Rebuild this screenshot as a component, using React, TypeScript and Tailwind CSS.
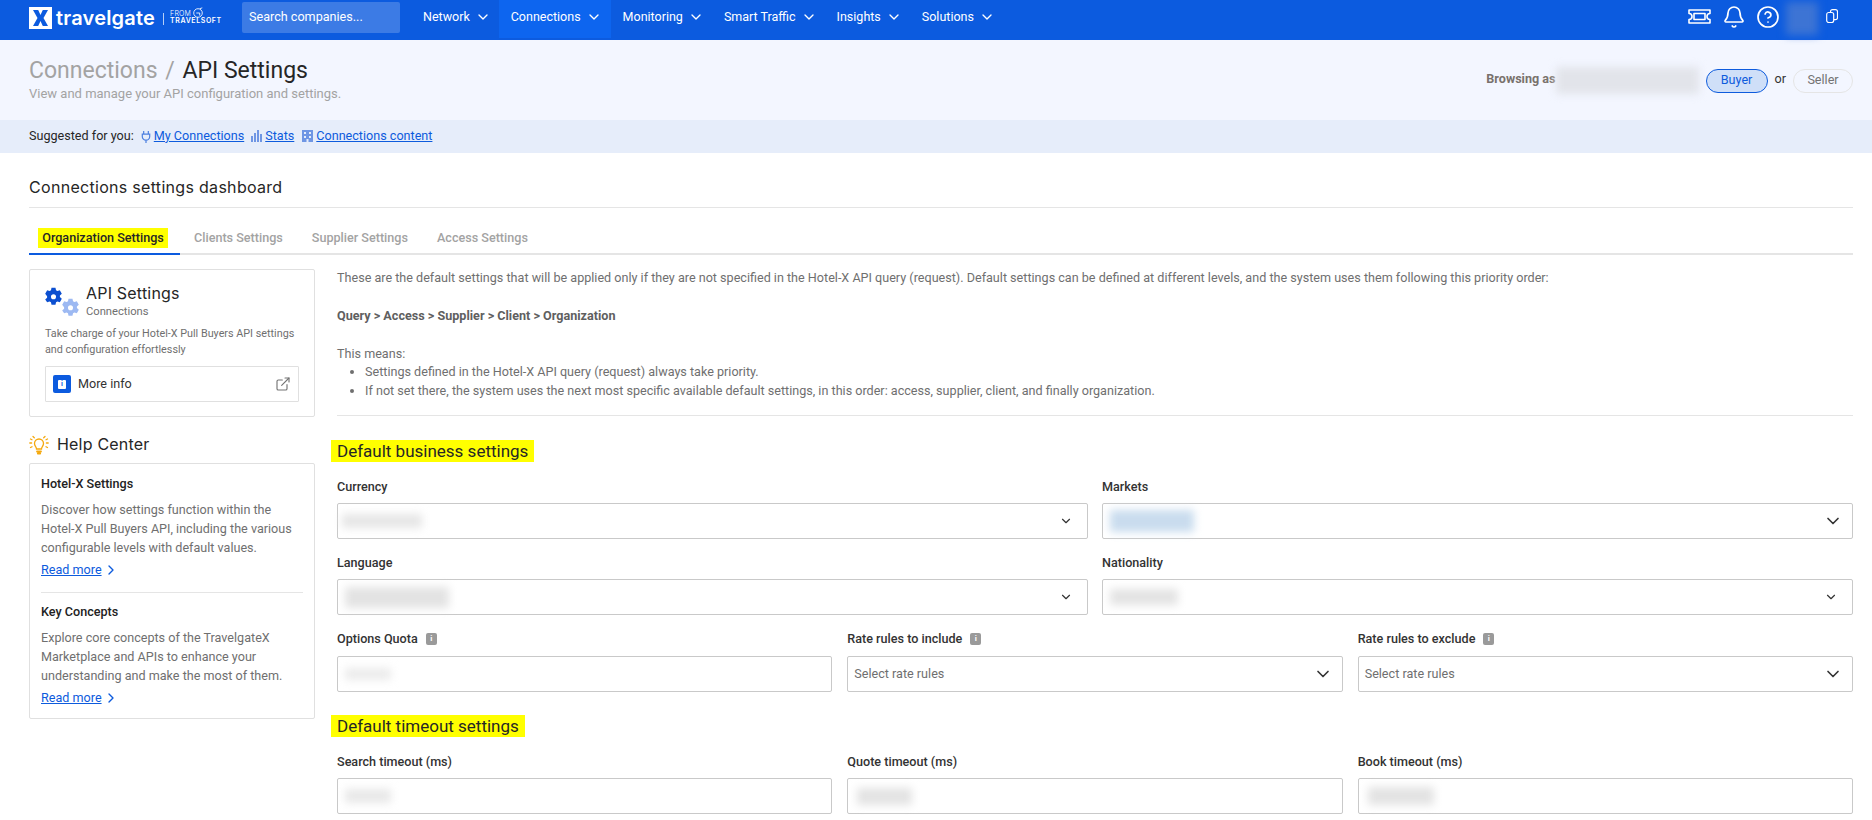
import { ChevronDown, ChevronRight, Bell, CircleHelp, ExternalLink } from "lucide-react"

const navItems = [
  { label: "Network", cls: "ml-[23px]" },
  { label: "Connections", cls: "ml-[8px] pl-[12px] pr-[9px] bg-[#0d65ef]" },
  { label: "Monitoring", cls: "ml-[12px]" },
  { label: "Smart Traffic", cls: "ml-[20px]" },
  { label: "Insights", cls: "ml-[20px]" },
  { label: "Solutions", cls: "ml-[20px]" },
]

function Gear({ className, color }: { className: string; color: string }) {
  return (
    <svg viewBox="0 0 24 24" className={className} fill={color}>
      <path
        fillRule="evenodd"
        d="M9.500 1h5l.7 3.200 1.700 1 3.100-1 2.500 4.300-2.400 2.200v2l2.400 2.200-2.500 4.300-3.100-1-1.700 1-.7 3.200h-5l-.7-3.200-1.700-1-3.100 1L1.500 15.900l2.400-2.200v-2L1.500 8.500 4 4.200l3.100 1 1.700-1L9.500 1zM12 9a3.200 3.200 0 1 0 0 6.400A3.200 3.200 0 0 0 12 9z"
      />
    </svg>
  )
}

function InfoTag() {
  return (
    <span className="ml-[8px] inline-flex h-[12px] w-[11px] items-center justify-center rounded-[2px] bg-[#9a9a9a] text-[8px] font-bold leading-none text-white">
      i
    </span>
  )
}

function Blur({ className }: { className: string }) {
  return <div className={`blur-[4px] ${className}`} />
}

function Field({
  label,
  info,
  placeholder,
  blur,
  chevron,
}: {
  label: string
  info?: boolean
  placeholder?: string
  blur?: string
  chevron?: "small" | "large"
}) {
  return (
    <div className={info ? "flex flex-col gap-[9px]" : "flex flex-col gap-[8px]"}>
      <div className="flex h-[17px] items-center text-[12.6px] font-medium leading-[17px] text-[#333]">
        {label}
        {info && <InfoTag />}
      </div>
      <div className="flex h-[36px] items-center justify-between rounded-[2px] border border-[#c9c9c9] bg-white pl-[4px] pr-[13px]">
        {blur && <Blur className={blur} />}
        {placeholder && <span className="pl-[2px] text-[12.6px] text-[#6f6f6f]">{placeholder}</span>}
        {chevron === "small" && <ChevronDown size={14} strokeWidth={2} className="ml-auto mr-[1px] text-[#333]" />}
        {chevron === "large" && <ChevronDown size={20} strokeWidth={2} className="ml-auto mr-[-4px] text-[#333]" />}
      </div>
    </div>
  )
}

function HelpItem({ title, lines }: { title: string; lines: string[] }) {
  return (
    <div>
      <div className="text-[12.6px] font-medium leading-[19px] text-[#222]">{title}</div>
      <div className="mt-[7px] text-[12.6px] leading-[19px] text-[#6f6f6f]">
        {lines.map((line) => (
          <div key={line}>{line}</div>
        ))}
      </div>
      <a className="mt-[3px] flex items-center text-[12.6px] leading-[19px] text-[#0d5bdd]">
        <span className="underline">Read more</span>
        <ChevronRight size={16} strokeWidth={2} className="ml-[1px]" />
      </a>
    </div>
  )
}

export default function App() {
  return (
    <div className="h-[820px] w-[1872px] overflow-hidden bg-white font-['Roboto',sans-serif]">
      {/* top nav */}
      <header className="flex h-[40px] items-start bg-[#0c5bdf] text-white">
        <div className="flex w-[242px] shrink-0 items-start">
          <div className="ml-[29px] mt-[7px] flex h-[22px] w-[23px] items-center justify-center bg-white">
            <svg viewBox="0 0 23 22" className="h-[22px] w-[23px]">
              <path d="M4 3h5.200l2.300 5 2.300-5H19l-4.500 8L19 19h-5.200l-2.300-5-2.300 5H4l4.500-8L4 3z" fill="#0c5bdf" />
            </svg>
          </div>
          <span className="ml-[4px] mt-[5px] font-['Inter',sans-serif] text-[20px] font-semibold leading-[26px] tracking-[0.2px]">
            travelgate
          </span>
          <div className="ml-[8px] mt-[13px] h-[12px] w-px bg-white/70" />
          <div className="relative ml-[6px] mt-[10px] w-[54px] font-['Inter',sans-serif] leading-none">
            <div className="text-[7px] font-light tracking-[0.2px]">FROM</div>
            <div className="text-[7px] font-semibold tracking-[0.6px]">TRAVELSOFT</div>
            <svg viewBox="0 0 14 14" className="absolute left-[22px] top-[-3px] h-[12px] w-[12px]" fill="none" stroke="white" strokeWidth="1">
              <circle cx="7" cy="7" r="5" />
              <path d="M5 7h4v3M9 2l3 -1" />
            </svg>
          </div>
        </div>
        <div className="mt-[2px] flex h-[31px] w-[158px] items-center rounded-[2px] bg-white/20 pl-[7px] text-[12.6px]">
          Search companies...
        </div>
        {navItems.map((item) => (
          <div key={item.label} className={`${item.cls} flex h-[38px] items-center gap-[5px] text-[12.5px] font-normal`}>
            <span className="relative top-[-2px]">{item.label}</span>
            <ChevronDown size={16} strokeWidth={2} className="relative top-[-2px]" />
          </div>
        ))}
        <div className="ml-auto mr-[34px] flex items-start">
          <svg viewBox="0 0 23 15" className="mt-[9px] h-[15px] w-[23px]" fill="none" stroke="white" strokeWidth="1.600" strokeLinejoin="round">
            <path d="M1 1h21v3.500a3 3 0 0 0 0 6V14H1v-3.500a3 3 0 0 0 0-6z" />
            <rect x="6" y="4.500" width="11" height="6" />
          </svg>
          <Bell size={24} strokeWidth={1.7} className="ml-[11px] mt-[5px]" />
          <CircleHelp size={24} strokeWidth={1.7} className="ml-[10px] mt-[5px]" />
          <Blur className="ml-[6px] mt-[2px] h-[33px] w-[32px] bg-[#3d74d4]" />
          <svg viewBox="0 0 12 14" className="ml-[8px] mt-[9px] h-[14px] w-[12px]" fill="none" stroke="white" strokeWidth="1.200">
            <rect x="4.500" y="0.700" width="7" height="10" rx="2" />
            <rect x="0.700" y="3.500" width="7" height="10" rx="2" fill="#0c5bdf" />
          </svg>
        </div>
      </header>

      {/* page title */}
      <section className="flex h-[80px] justify-between bg-[#f3f6ff] pl-[29px] pr-[19px]">
        <div>
          <h1 className="mt-[16px] text-[23px] font-normal leading-[30px] text-[#a3a3a3]">
            Connections <span className="mx-[2px]">/</span> <span className="text-[#262626]">API Settings</span>
          </h1>
          <p className="-mt-[1px] text-[13px] leading-[18px] text-[#a3a3a3]">View and manage your API configuration and settings.</p>
        </div>
        <div className="mt-[27px] flex h-[27px] items-center text-[12.6px]">
          <span className="mb-[3px] font-bold text-[#78716c]">Browsing as</span>
          <Blur className="h-[27px] w-[143px] bg-[#e2e4ea]" />
          <span className="ml-[7px] flex h-[24px] w-[62px] items-center justify-center rounded-full border border-[#0d5bdd] bg-[#cfdff8] text-[#0d5bdd]">
            Buyer
          </span>
          <span className="mb-[2px] ml-[7px] text-[#333]">or</span>
          <span className="ml-[7px] flex h-[24px] w-[60px] items-center justify-center rounded-full border border-[#e5e5e5] text-[#737373]">
            Seller
          </span>
        </div>
      </section>

      {/* suggestions */}
      <nav className="flex h-[33px] items-center bg-[#e6edfa] pb-[1px] pl-[29px] text-[12.6px] text-[#0d5bdd]">
        <span className="text-[#262626]">Suggested for you:</span>
        <svg viewBox="0 0 10 14" className="ml-[7px] h-[13px] w-[10px]" fill="none" stroke="#4b7fe0" strokeWidth="1.300">
          <path d="M2.500 1v3M7.500 1v3M1 4.500h8V7a4 4 0 0 1-8 0zM5 11v3" />
        </svg>
        <a className="ml-[3px] underline">My Connections</a>
        <svg viewBox="0 0 11 12" className="ml-[7px] h-[12px] w-[11px]" fill="#6f96e4">
          <rect x="0" y="6" width="2" height="6" />
          <rect x="3" y="3" width="2" height="9" />
          <rect x="6" y="0" width="2" height="12" />
          <rect x="9" y="4" width="2" height="8" />
        </svg>
        <a className="ml-[3px] underline">Stats</a>
        <svg viewBox="0 0 11 12" className="ml-[8px] h-[12px] w-[11px]" fill="#6f96e4">
          <path fillRule="evenodd" d="M0 0h11v12H0zM2 2v2h2V2zm5 0v2h2V2zM2 6v2h2V6zm5 0v2h2V6zM4.500 9v3h2V9z" />
        </svg>
        <a className="ml-[3px] underline">Connections content</a>
      </nav>

      <main className="pl-[29px] pr-[19px]">
        <h2 className="mt-[24px] font-['Inter',sans-serif] text-[16px] font-normal leading-[20px] tracking-[0.3px] text-[#262626]">
          Connections settings dashboard
        </h2>
        <div className="mt-[10px] h-px bg-[#e5e5e5]" />

        {/* tabs */}
        <div className="mt-[20px] flex h-[27px] items-start border-b-2 border-[#e5e5e5] text-[12.6px] font-medium text-[#a3a3a3]">
          <div className="-mb-[2px] h-[27px] w-[151px] border-b-[2px] border-[#0c5bdf] pl-[9px]">
            <span className="inline-block h-[20px] w-[130px] bg-[#ffff00] text-center leading-[19px] text-[#262626]">
              Organization Settings
            </span>
          </div>
          <span className="ml-[14px] leading-[19px]">Clients Settings</span>
          <span className="ml-[29px] leading-[19px]">Supplier Settings</span>
          <span className="ml-[29px] leading-[19px]">Access Settings</span>
        </div>

        <div className="mt-[14px] flex items-start gap-[22px]">
          {/* left column */}
          <aside className="w-[286px] shrink-0">
            <div className="h-[148px] rounded-[2px] border border-[#e0e0e0] px-[15px]">
              <div className="flex h-[56px] items-start">
                <div className="relative mt-[17px] h-[30px] w-[41px] shrink-0">
                  <Gear className="absolute left-[-1px] top-0 h-[19px] w-[19px]" color="#0c4fd0" />
                  <Gear className="absolute left-[16px] top-[11px] h-[19px] w-[19px]" color="#9db9f2" />
                </div>
                <div className="mt-[12px]">
                  <div className="font-['Inter',sans-serif] text-[16px] font-normal leading-[22px] tracking-[0.2px] text-[#262626]">API Settings</div>
                  <div className="text-[11.2px] leading-[15px] text-[#6f6f6f]">Connections</div>
                </div>
              </div>
              <p className="whitespace-nowrap text-[10.8px] leading-[16px] text-[#6f6f6f]">
                Take charge of your Hotel-X Pull Buyers API settings
                <br />
                and configuration effortlessly
              </p>
              <div className="mt-[8px] flex h-[36px] items-center rounded-[1px] border border-[#e0e0e0] pl-[7px] pr-[7px]">
                <span className="flex h-[18px] w-[18px] items-center justify-center rounded-[2px] bg-[#0c5bdf]">
                  <span className="flex h-[9px] w-[8px] items-center justify-center rounded-[1px] bg-white text-[7px] font-bold leading-none text-[#0c5bdf]">
                    i
                  </span>
                </span>
                <span className="ml-[7px] text-[12.6px] text-[#333]">More info</span>
                <ExternalLink size={16} strokeWidth={1.7} className="ml-auto text-[#737373]" />
              </div>
            </div>

            <div className="mt-[18px] flex h-[20px] items-center">
              <svg viewBox="0 0 20 20" className="h-[20px] w-[20px]" fill="none" stroke="#f5a90f" strokeWidth="1.300" strokeLinecap="round">
                <path d="M7.500 14c0-2-2-2.800-2-5.500a4.500 4.500 0 0 1 9 0c0 2.700-2 3.500-2 5.500z" />
                <path d="M8 16.500h4M8.800 18.500h2.400" strokeWidth="1.800" />
                <path d="M4 1.500l1.300 1.300M16 1.500l-1.300 1.300M.8 8h1.800M17.400 8h1.800M1.500 12.500l1.500-.8M18.500 12.500l-1.500-.8M1.500 4l1.500.8M18.500 4l-1.500.8" />
              </svg>
              <span className="mb-[2px] ml-[8px] font-['Inter',sans-serif] text-[16px] font-normal tracking-[0.2px] text-[#262626]">Help Center</span>
            </div>

            <div className="mt-[8px] h-[256px] rounded-[2px] border border-[#e0e0e0] px-[11px] pt-[10px]">
              <HelpItem
                title="Hotel-X Settings"
                lines={["Discover how settings function within the", "Hotel-X Pull Buyers API, including the various", "configurable levels with default values."]}
              />
              <div className="mb-[9px] mt-[13px] h-px bg-[#e5e5e5]" />
              <HelpItem
                title="Key Concepts"
                lines={["Explore core concepts of the TravelgateX", "Marketplace and APIs to enhance your", "understanding and make the most of them."]}
              />
            </div>
          </aside>

          {/* right column */}
          <div className="min-w-0 flex-1">
            <div className="-mt-[1px] text-[12.6px] leading-[19px] text-[#6f6f6f]">
              <p>
                These are the default settings that will be applied only if they are not specified in the Hotel-X API query (request). Default settings can be defined at different levels, and the system uses them following this priority order:
              </p>
              <p className="mt-[19px] font-bold text-[#5f5f5f]">{"Query > Access > Supplier > Client > Organization"}</p>
              <p className="mt-[19px]">This means:</p>
              <ul className="-mt-[1px] list-disc pl-[28px]">
                <li>Settings defined in the Hotel-X API query (request) always take priority.</li>
                <li>If not set there, the system uses the next most specific available default settings, in this order: access, supplier, client, and finally organization.</li>
              </ul>
            </div>
            <div className="mt-[15px] h-px bg-[#e5e5e5]" />

            <h3 className="-ml-[6px] mt-[24px] h-[22px] w-fit bg-[#ffff00] px-[6px] text-[17px] font-normal leading-[22px] text-[#262626]">Default business settings</h3>
            <div className="mt-[16px] grid grid-cols-2 gap-x-[14px] gap-y-[15px]">
              <Field label="Currency" blur="h-[14px] w-[80px] bg-[#e6e6e6]" chevron="small" />
              <Field label="Markets" blur="ml-[3px] h-[22px] w-[84px] bg-[#c9dcee]" chevron="large" />
              <Field label="Language" blur="ml-[3px] h-[21px] w-[104px] bg-[#e3e3e3]" chevron="small" />
              <Field label="Nationality" blur="ml-[3px] h-[16px] w-[68px] bg-[#e3e3e3]" chevron="small" />
            </div>
            <div className="mt-[15px] grid grid-cols-3 gap-x-[15px]">
              <Field label="Options Quota" info blur="ml-[3px] h-[12px] w-[46px] bg-[#ebebeb]" />
              <Field label="Rate rules to include" info placeholder="Select rate rules" chevron="large" />
              <Field label="Rate rules to exclude" info placeholder="Select rate rules" chevron="large" />
            </div>

            <h3 className="-ml-[6px] mt-[23px] h-[22px] w-fit bg-[#ffff00] px-[6px] text-[17px] font-normal leading-[22px] text-[#262626]">Default timeout settings</h3>
            <div className="mt-[16px] grid grid-cols-3 gap-x-[15px]">
              <Field label="Search timeout (ms)" blur="ml-[3px] h-[14px] w-[46px] bg-[#e8e8e8]" />
              <Field label="Quote timeout (ms)" blur="ml-[5px] h-[17px] w-[55px] bg-[#e3e3e3]" />
              <Field label="Book timeout (ms)" blur="ml-[5px] h-[18px] w-[66px] bg-[#e3e3e3]" />
            </div>
          </div>
        </div>
      </main>
    </div>
  )
}
